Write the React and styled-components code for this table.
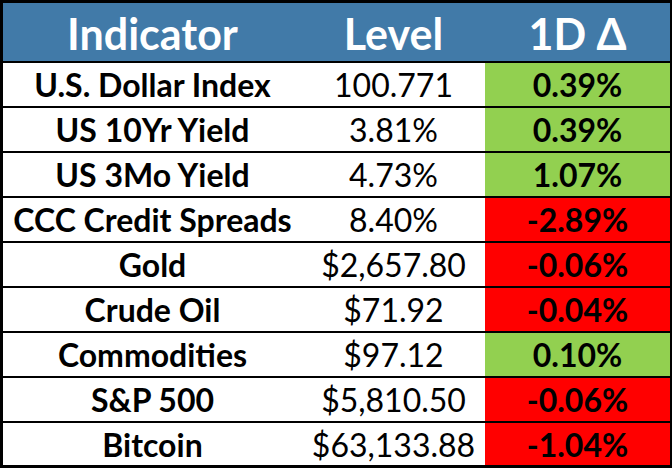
import React from "react";
import styled, { createGlobalStyle } from "styled-components";

const rows = [
  { name: "U.S. Dollar Index", level: "100.771", change: "0.39%", up: true },
  { name: "US 10Yr Yield", level: "3.81%", change: "0.39%", up: true },
  { name: "US 3Mo Yield", level: "4.73%", change: "1.07%", up: true },
  { name: "CCC Credit Spreads", level: "8.40%", change: "-2.89%", up: false },
  { name: "Gold", level: "$2,657.80", change: "-0.06%", up: false },
  { name: "Crude Oil", level: "$71.92", change: "-0.04%", up: false },
  { name: "Commodities", level: "$97.12", change: "0.10%", up: true },
  { name: "S&P 500", level: "$5,810.50", change: "-0.06%", up: false },
  { name: "Bitcoin", level: "$63,133.88", change: "-1.04%", up: false },
];

const GlobalStyle = createGlobalStyle`
  html, body {
    margin: 0;
    padding: 0;
    background: #ffffff;
  }
`;

const App = () => {
  return (
    <>
      <GlobalStyle />
      <Table>
        <HeaderCell>Indicator</HeaderCell>
        <HeaderCell>Level</HeaderCell>
        <HeaderCell>1D Δ</HeaderCell>
        {rows.map((row, i) => {
          const last = i === rows.length - 1;
          return (
            <React.Fragment key={row.name}>
              <NameCell $last={last}>{row.name}</NameCell>
              <LevelCell $last={last}>{row.level}</LevelCell>
              <ChangeCell $last={last} $up={row.up}>
                {row.change}
              </ChangeCell>
            </React.Fragment>
          );
        })}
      </Table>
    </>
  );
};

const Table = styled.div`
  box-sizing: border-box;
  width: 672px;
  height: 468px;
  display: grid;
  grid-template-columns: 299px 183px 1fr;
  grid-template-rows: 60px repeat(8, 45px) 1fr;
  border: 3px solid #000;
  border-right-width: 2px;
  font-family: Lato, "Open Sans", sans-serif;
  color: #000;
`;

const Cell = styled.div`
  box-sizing: border-box;
  display: flex;
  align-items: center;
  justify-content: center;
  white-space: nowrap;
  border-bottom: ${(p) => (p.$last ? "none" : "2px solid #000")};
`;

const HeaderCell = styled(Cell)`
  background: #417aa8;
  color: #ffffff;
  font-size: 43px;
  font-weight: 700;
  padding-top: 2px;
`;

const NameCell = styled(Cell)`
  font-size: 32px;
  font-weight: 700;
`;

const LevelCell = styled(Cell)`
  font-size: 32px;
  font-weight: 400;
`;

const ChangeCell = styled(Cell)`
  font-size: 32px;
  font-weight: 700;
  background: ${(p) => (p.$up ? "#92d050" : "#ff0000")};
`;

export default App;
